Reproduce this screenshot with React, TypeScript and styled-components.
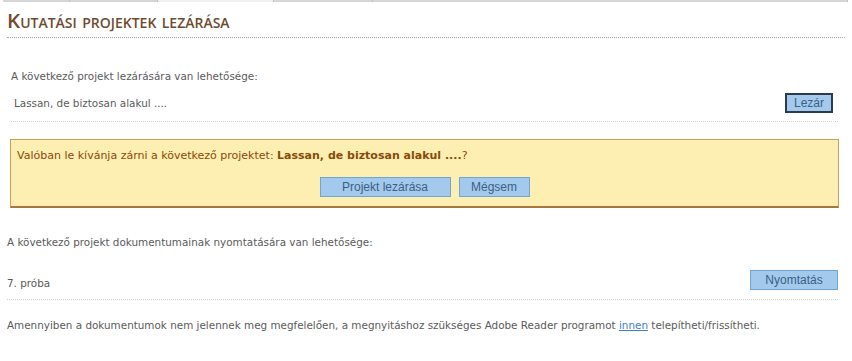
import React from "react";
import styled, { createGlobalStyle } from "styled-components";

const GlobalStyle = createGlobalStyle`
  body {
    margin: 0;
    background: #ffffff;
    font-family: "DejaVu Sans", Verdana, sans-serif;
    font-size: 10.4px;
    color: #5a5a5a;
  }
`;

const Page = styled.div`
  width: 852px;
  height: 361px;
  overflow: hidden;
`;

const TabStrip = styled.div`
  display: flex;
  margin: 0 4px 0 3px;
  height: 2px;
`;

const TabSeg = styled.div<{ $w: number; $light?: boolean }>`
  width: ${(p) => p.$w}px;
  flex: ${(p) => (p.$w ? "none" : "1")};
  background: ${(p) => (p.$light ? "#efefef" : "#d6d6d6")};
  border-right: 1px solid #c4c4c4;
`;

const Content = styled.div`
  padding: 0 7px;
`;

const Title = styled.h1`
  margin: 6px 0 0;
  font-family: "Open Sans", "DejaVu Sans", sans-serif;
  font-size: 20.6px;
  font-weight: 600;
  font-variant: small-caps;
  color: #6f4b30;
  line-height: 24px;
  padding-bottom: 5px;
  border-bottom: 1px dotted #a8a8a8;
`;

const Section = styled.div<{ $indent?: number }>`
  padding-left: ${(p) => p.$indent ?? 0}px;
`;

const Label = styled.div<{ $top: number }>`
  margin-top: ${(p) => p.$top}px;
  line-height: 14px;
`;

const Row = styled.div<{ $top: number; $pad?: number; $bottom?: number }>`
  display: flex;
  align-items: center;
  justify-content: space-between;
  margin-top: ${(p) => p.$top}px;
  margin-right: 7px;
  padding: 0 0 ${(p) => p.$bottom ?? 8}px ${(p) => p.$pad ?? 0}px;
  border-bottom: 1px dotted #d0d0d0;
`;

const RowText = styled.span<{ $drop?: number }>`
  line-height: 14px;
  margin-top: ${(p) => p.$drop ?? 0}px;
`;

const Button = styled.button<{ $w: number; $focus?: boolean; $right?: number }>`
  width: ${(p) => p.$w}px;
  height: 20px;
  padding: 0;
  margin-right: ${(p) => p.$right ?? 0}px;
  font-family: "Liberation Sans", Arial, sans-serif;
  font-size: 12px;
  color: #3c5f86;
  background: #a3caec;
  border: ${(p) => (p.$focus ? "2px solid #2b3b4c" : "1px solid #6ea6d8")};
  cursor: pointer;
`;

const ConfirmBox = styled.div`
  margin: 17px 6px 0 3px;
  height: 69px;
  box-sizing: border-box;
  background: #fdefb2;
  border: 1px solid #c99d5a;
  border-bottom: 2px solid #a8773a;
  padding: 9px 6px 0;
`;

const ConfirmText = styled.div`
  color: #8a4a08;
  font-size: 11px;
  line-height: 14px;
  strong {
    font-weight: bold;
  }
`;

const ConfirmButtons = styled.div`
  display: flex;
  justify-content: center;
  gap: 8px;
  margin-top: 14px;
`;

const Footer = styled.div`
  margin-top: 18px;
  line-height: 14px;
  a {
    color: #3a7fc4;
    text-decoration: underline;
  }
`;

const App = () => {
  return (
    <Page>
      <GlobalStyle />
      <TabStrip>
        <TabSeg $w={66} />
        <TabSeg $w={87} />
        <TabSeg $w={115} $light />
        <TabSeg $w={98} />
        <TabSeg $w={0} />
      </TabStrip>
      <Content>
        <Title>Kutatási projektek lezárása</Title>
        <Section $indent={4}>
          <Label $top={31}>A következő projekt lezárására van lehetősége:</Label>
          <Row $top={10} $pad={3}>
            <RowText>Lassan, de biztosan alakul ....</RowText>
            <Button $w={48} $focus $right={5}>
              Lezár
            </Button>
          </Row>
        </Section>
        <ConfirmBox>
          <ConfirmText>
            Valóban le kívánja zárni a következő projektet:{" "}
            <strong>Lassan, de biztosan alakul ....</strong>?
          </ConfirmText>
          <ConfirmButtons>
            <Button $w={131}>Projekt lezárása</Button>
            <Button $w={71}>Mégsem</Button>
          </ConfirmButtons>
        </ConfirmBox>
        <Label $top={27}>A következő projekt dokumentumainak nyomtatására van lehetősége:</Label>
        <Row $top={21} $bottom={9}>
          <RowText $drop={6}>7. próba</RowText>
          <Button $w={88}>Nyomtatás</Button>
        </Row>
        <Footer>
          Amennyiben a dokumentumok nem jelennek meg megfelelően, a megnyitáshoz szükséges
          Adobe Reader programot <a href="#">innen</a> telepítheti/frissítheti.
        </Footer>
      </Content>
    </Page>
  );
};

export default App;
